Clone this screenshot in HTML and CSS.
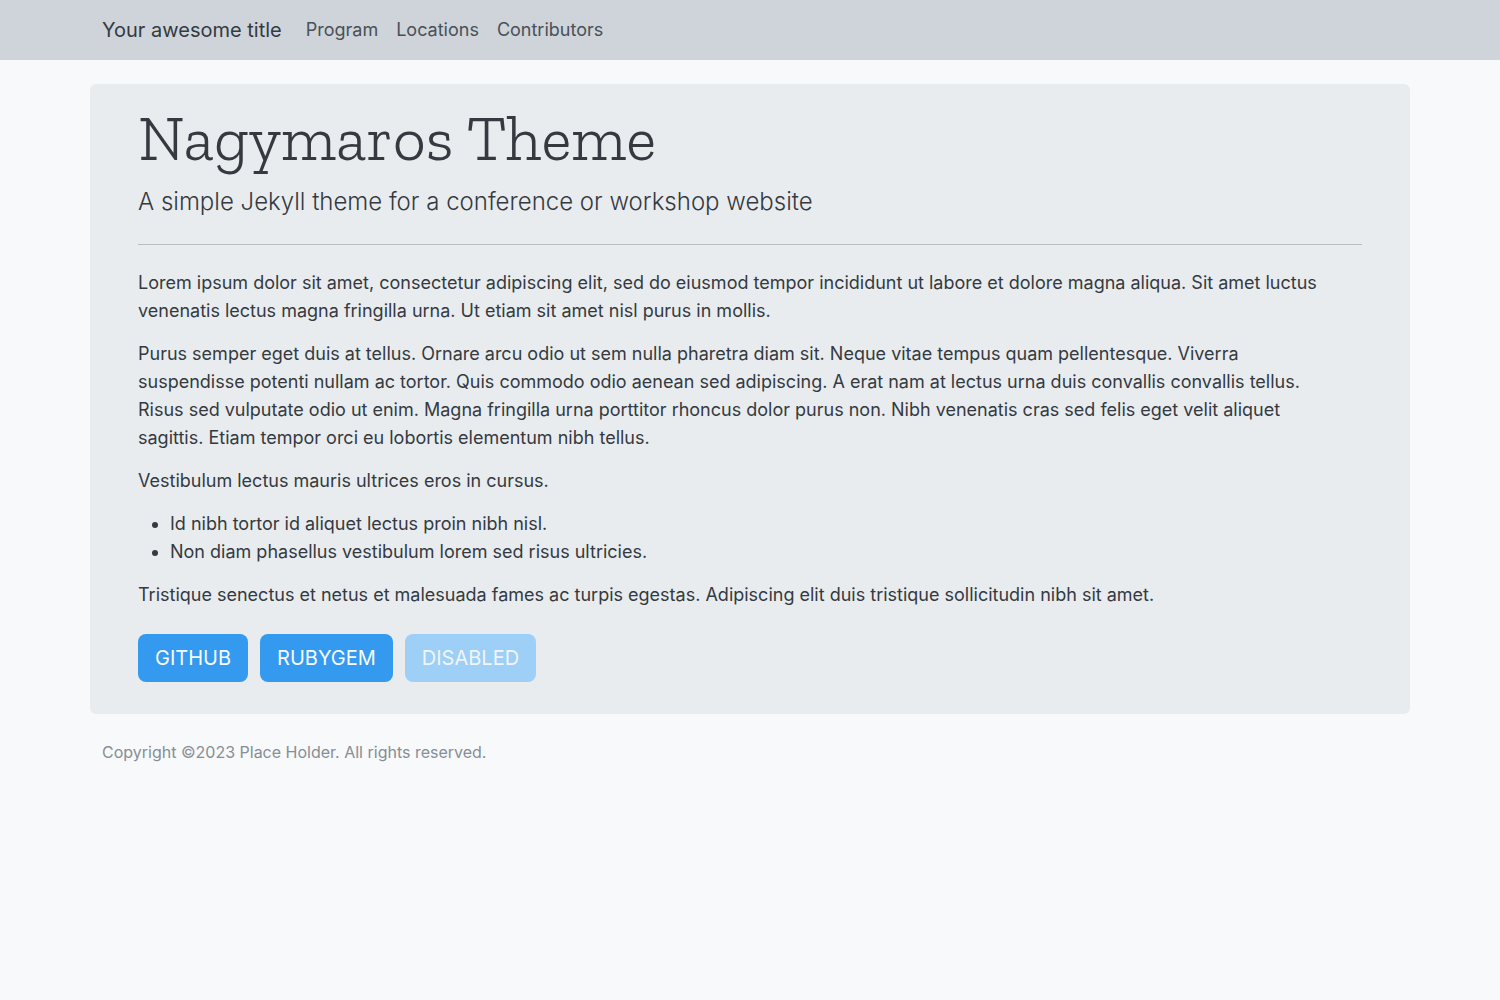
FILE: index.html
```html
<!DOCTYPE html>
<html lang="en">
<head>
<meta charset="utf-8">
<meta name="viewport" content="width=device-width, initial-scale=1">
<title>Your awesome title</title>
<link rel="stylesheet" href="styles.css">
</head>
<body>
<header class="navbar">
  <nav class="container nav-inner">
    <a class="brand" href="#">Your awesome title</a>
    <ul class="nav-list">
      <li><a class="nav-link" href="#">Program</a></li>
      <li><a class="nav-link" href="#">Locations</a></li>
      <li><a class="nav-link" href="#">Contributors</a></li>
    </ul>
  </nav>
</header>
<main class="hero">
  <h1 class="title">Nagymaros Theme</h1>
  <p class="lead">A simple Jekyll theme for a conference or workshop website</p>
  <hr class="rule">
  <div class="content">
    <p>Lorem ipsum dolor sit amet, consectetur adipiscing elit, sed do eiusmod tempor incididunt ut labore et dolore magna aliqua. Sit amet luctus venenatis lectus magna fringilla urna. Ut etiam sit amet nisl purus in mollis.</p>
    <p>Purus semper eget duis at tellus. Ornare arcu odio ut sem nulla pharetra diam sit. Neque vitae tempus quam pellentesque. Viverra suspendisse potenti nullam ac tortor. Quis commodo odio aenean sed adipiscing. A erat nam at lectus urna duis convallis convallis tellus. Risus sed vulputate odio ut enim. Magna fringilla urna porttitor rhoncus dolor purus non. Nibh venenatis cras sed felis eget velit aliquet sagittis. Etiam tempor orci eu lobortis elementum nibh tellus.</p>
    <p>Vestibulum lectus mauris ultrices eros in cursus.</p>
    <ul>
      <li>Id nibh tortor id aliquet lectus proin nibh nisl.</li>
      <li>Non diam phasellus vestibulum lorem sed risus ultricies.</li>
    </ul>
    <p>Tristique senectus et netus et malesuada fames ac turpis egestas. Adipiscing elit duis tristique sollicitudin nibh sit amet.</p>
  </div>
  <div class="actions">
    <button class="btn" type="button">GITHUB</button>
    <button class="btn" type="button">RUBYGEM</button>
    <button class="btn" type="button" disabled>DISABLED</button>
  </div>
</main>
<footer class="container footer">Copyright ©2023 Place Holder. All rights reserved.</footer>
</body>
</html>
```
FILE: styles.css
```css
* {
  box-sizing: border-box;
}

body {
  margin: 0;
  background: #f8f9fa;
  color: #343a40;
  font-family: Inter, "Liberation Sans", sans-serif;
  font-size: 18px;
  line-height: 28px;
}

.container {
  max-width: 1320px;
  margin: 0 auto;
  padding: 0 12px;
}

.navbar {
  padding: 8px 0;
  background: #ced4da;
}

.nav-inner {
  display: flex;
  align-items: center;
  gap: 16px;
  min-height: 44px;
}

.brand {
  color: #343a40;
  font-size: 20px;
  text-decoration: none;
}

.nav-list {
  display: flex;
  gap: 2px;
  margin: 0;
  padding: 0;
  list-style: none;
}

.nav-link {
  padding: 8px;
  color: #495057;
  text-decoration: none;
}

.hero {
  max-width: 1320px;
  margin: 24px auto;
  padding: 24px 48px 32px;
  border-radius: 6px;
  background: #e9ecef;
}

.title {
  margin: 0 0 16px;
  font-family: "Zilla Slab", "DejaVu Serif", serif;
  font-size: 64px;
  font-weight: 300;
  line-height: 60px;
}

.lead {
  margin: 0;
  font-size: 24px;
  font-weight: 300;
  line-height: 36px;
}

.rule {
  height: 1px;
  margin: 24px 0;
  border: 0;
  background: #b9bdc2;
}

.content {
  padding-right: 24px;
}

.content p,
.content ul {
  margin: 0 0 15px;
}

.content ul {
  padding-left: 32px;
}

.actions {
  display: flex;
  gap: 12px;
  margin-top: 25px;
}

.btn {
  height: 48px;
  padding: 0 17px;
  border: 0;
  border-radius: 8px;
  background: #339af0;
  color: #f8f9fa;
  font: 400 20px/30px Inter, sans-serif;
}

.btn:disabled {
  background: #9dcff7;
  color: #f0f5fa;
}

.footer {
  color: #868e96;
  font-size: 16px;
  line-height: 28px;
}
```
